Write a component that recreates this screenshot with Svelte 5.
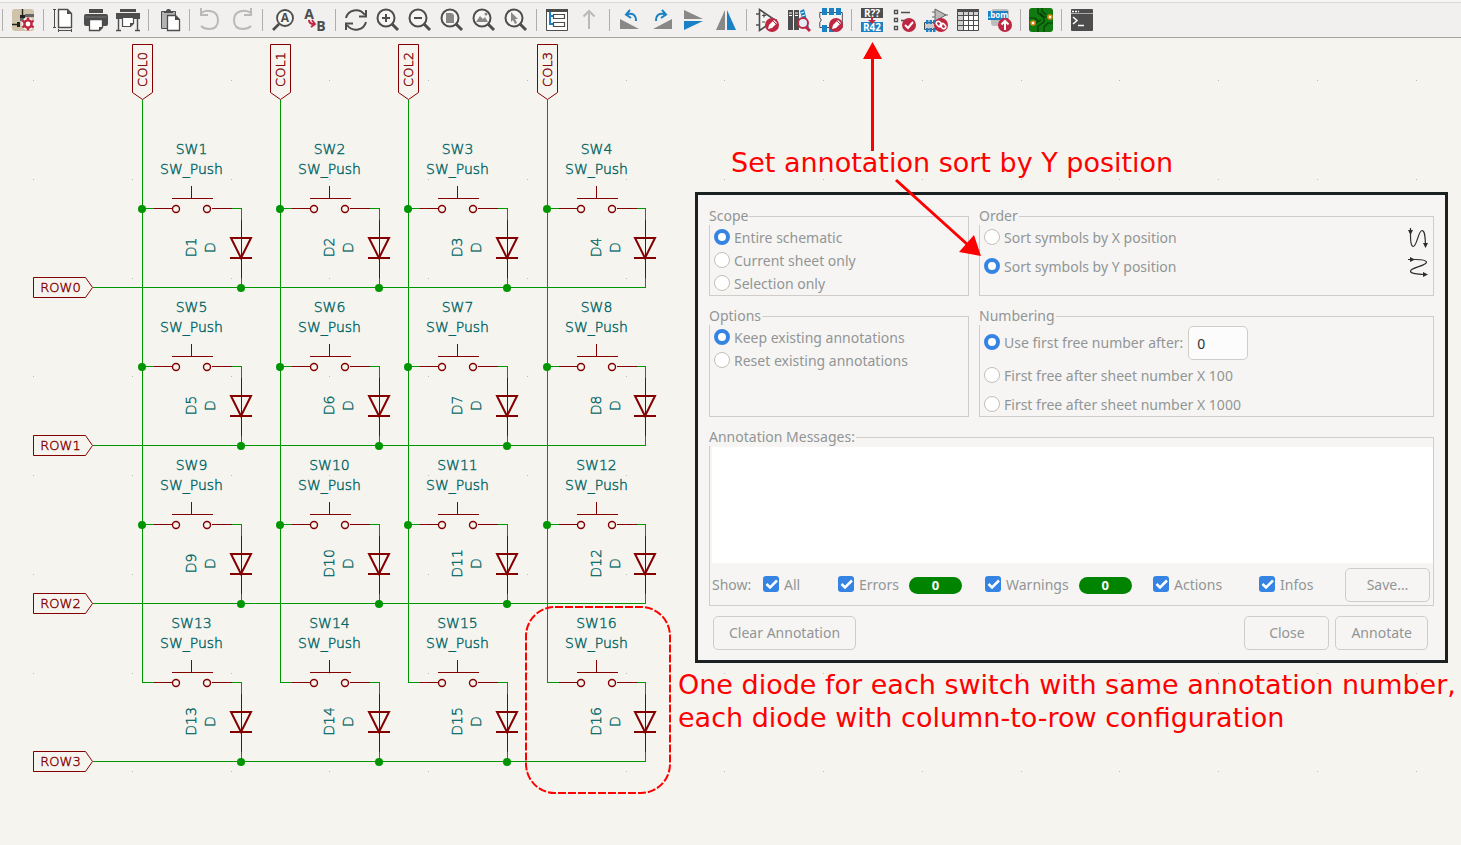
<script>
  const K = '#4d4d4d';
  const G = '#888888';
  const B = '#1a81c4';
  const R = '#bf2641';

  const lens = (inner) =>
    `<circle cx="10" cy="10" r="8.500" fill="#fff" fill-opacity=".35" stroke="${K}" stroke-width="2"/><path d="M16 16L22 22" stroke="${K}" stroke-width="3"/>${inner}`;
  const badge = (inner) => `<circle cx="17" cy="17" r="7" fill="${R}"/>${inner}`;
  const pencil = '<path d="M13 21l1-4 5-5 3 3-5 5z" fill="#fff"/><path d="M18 13l3 3" stroke="#bf2641" stroke-width="1"/>';

  const icons = {
    setup: `<rect x="1" y="1" width="22" height="22" rx="3" fill="#cfc3a9"/><path d="M11.500 1v9M1 16.500h6" stroke="#222" stroke-width="1.400"/><path d="M9 7h5v3H9zM6 14h3v5H6z" fill="#222"/><path d="M14 6h9v3h-9zM9 10h4v3H9z" fill="#666"/><circle cx="17" cy="16" r="6.500" fill="#fff" fill-opacity=".8"/><g stroke="${R}"><circle cx="17" cy="16" r="3.600" fill="#fff" stroke-width="2.400"/><path d="M17 9.500v3M17 19.500v3M11.400 12.800l2.500 1.500M20 17.700l2.600 1.500M11.400 19.200l2.500-1.500M20 14.300l2.600-1.500" stroke-width="2.400"/></g>`,
    page: `<path d="M6.500 1.500h9l4 4v14h-13z" fill="#fff" stroke="${K}" stroke-width="1.400"/><path d="M15 1.500v4.500h4.500z" fill="${K}"/><path d="M2.500 1v19M1 1.500h3M1 19.500h3M6 22.500h14M6.500 21v3M19.500 21v3" stroke="${K}" fill="none"/>`,
    print: `<path d="M5 1h14v4H5zM2 6h20q2 0 2 2v8q0 2-2 2h-3v-6H5v6H2q-2 0-2-2V8q0-2 2-2z" fill="${K}"/><path d="M5.500 11.500h13v8l-3 3h-10z" fill="#fff" stroke="${K}" stroke-width="1.300"/><path d="M15 23v-4h4z" fill="${K}"/><path d="M1 9h22" stroke="#777"/>`,
    plot: `<path d="M4 1h16v3H4zM0 5h24v6H0z" fill="${K}"/><path d="M2.500 11v12M21.500 11v12M0 22.500h5M19 22.500h5" stroke="${K}" stroke-width="1.400"/><path d="M6.500 9.500h11v6l-3 3h-8z" fill="#fff" stroke="${K}" stroke-width="1.200"/><path d="M14 19v-4h4z" fill="${K}"/>`,
    paste: `<path d="M4.500 3.500h14v17h-14z" fill="#b3b3b3" stroke="${K}"/><path d="M7 4q0-1 2-1 0-2 2.500-2T14 3q2 0 2 1v1H7z" fill="${K}"/><path d="M10.500 7.500h8l4 4v11h-12z" fill="#fff" stroke="${K}" stroke-width="1.300"/><path d="M18 7v5h5z" fill="${K}"/>`,
    undo: `<path d="M3 5C8 1 20 2 20 12q0 9-9 9-5 0-8-3" fill="none" stroke="#b9b9b9" stroke-width="2"/><path d="M3 0v7h7" fill="none" stroke="#b9b9b9" stroke-width="2"/>`,
    redo: `<path d="M21 5C16 1 4 2 4 12q0 9 9 9 5 0 8-3" fill="none" stroke="#b9b9b9" stroke-width="2"/><path d="M21 0v7h-7" fill="none" stroke="#b9b9b9" stroke-width="2"/>`,
    find: `<circle cx="14" cy="10" r="8" fill="#fff" fill-opacity=".4" stroke="${K}" stroke-width="1.800"/><path d="M8 16l-6 6" stroke="${K}" stroke-width="2.600"/><text x="14" y="14" text-anchor="middle" font-size="12" font-weight="700" fill="${K}">A</text>`,
    replace: `<text x="6" y="11" text-anchor="middle" font-size="14" font-weight="700" fill="${K}">A</text><text x="18" y="23" text-anchor="middle" font-size="14" font-weight="700" fill="${K}">B</text><path d="M6 12q0 4 5 4" fill="none" stroke="${R}" stroke-width="2"/><path d="M9 12l3 4-4 3" fill="none" stroke="${R}" stroke-width="1.800"/>`,
    refresh: `<path d="M2 10C4 2 15-1 21 7M22 14C20 22 9 25 3 17" fill="none" stroke="${K}" stroke-width="2"/><path d="M22 2v6.500h-7M2 22v-6.500h7" fill="none" stroke="${K}" stroke-width="2"/>`,
    zoomIn: lens(`<path d="M10 6v8M6 10h8" stroke="${K}" stroke-width="2"/>`),
    zoomOut: lens(`<path d="M6 10h8" stroke="${K}" stroke-width="2"/>`),
    zoomPage: lens(`<path d="M6 5h6l2 2v8H6z" fill="${G}"/>`),
    zoomFit: lens(`<path d="M4 14l4-6 3 3 2-2 3 5z" fill="${G}"/><circle cx="14" cy="6" r="1.500" fill="${G}"/>`),
    zoomSel: lens(`<path d="M7 4v10l2-2 2 4 2-1-2-4h3z" fill="${G}"/>`),
    tree: `<path d="M1.500 1.500h21v21h-21z" fill="#fff" stroke="${K}"/><path d="M1 1h22v3H1z" fill="${K}"/><path d="M5 4v12h4M5 8h4" fill="none" stroke="${B}" stroke-width="2"/><path d="M8.500 6.500h11v4h-11zM8.500 14.500h11v4h-11z" fill="#fff" stroke="${K}" stroke-width="1.200"/>`,
    up: `<path d="M12 3v18M6.500 8.500L12 3l5.500 5.500" fill="none" stroke="#b9b9b9" stroke-width="2"/>`,
    ccw: `<path d="M2 11v10h19z" fill="${G}"/><path d="M9 6q9-2 9 7" fill="none" stroke="${B}" stroke-width="2"/><path d="M12 2L8 6.500l5 3.500" fill="none" stroke="${B}" stroke-width="2"/>`,
    cw: `<path d="M22 11v10H3z" fill="${G}"/><path d="M15 6Q6 4 6 13" fill="none" stroke="${B}" stroke-width="2"/><path d="M12 2l4 4.500-5 3.500" fill="none" stroke="${B}" stroke-width="2"/>`,
    mirV: `<path d="M2 2l19 9H2z" fill="${G}"/><path d="M2 22l19-9H2z" fill="${B}"/>`,
    mirH: `<path d="M2 22L11 2v20z" fill="${G}"/><path d="M22 22L13 2v20z" fill="${B}"/>`,
    symEdit: `<path d="M4.500 1.500v21L20 12zM1 6h3.500M1 17h3.500M19 12h3" fill="#fff" fill-opacity=".4" stroke="${K}" stroke-width="1.600"/><path d="M7 7.500h4M9 5.500v4M7 14h3" stroke="${K}" stroke-width="1.200"/>${badge(pencil)}`,
    library: `<path d="M1 2h5v20H1zM7 2h5v20H7z" fill="${K}"/><path d="M13 3l4-2 5 19-4 1z" fill="${B}"/><path d="M2 5h3M2 7.500h3M8 5h3M8 7.500h3M14 5l3-1M15 8l3-1" stroke="#fff"/><circle cx="16" cy="15" r="5" fill="#e6eef5" stroke="${R}" stroke-width="2"/><path d="M19 19l4 4" stroke="${R}" stroke-width="3"/>`,
    fpEdit: `<path d="M.8 4.500h22.500v15H.8v-5q3-2.500 0-5z" fill="#fff" fill-opacity=".3" stroke="${K}"/><path d="M3 0h5v7H3zM10 0h5v7h-5zM17 0h5v7h-5zM3 17h5v7H3zM10 17h5v7h-5z" fill="${B}"/>${badge(pencil)}`,
    annotate: `<path d="M1 0h22v10H1z" fill="${K}"/><path d="M1 14h22v10H1z" fill="${B}"/><g font-size="10" font-weight="700" fill="#fff" text-anchor="middle"><text x="12" y="9">R??</text><text x="12" y="23">R42</text></g><path d="M11 9h2v3h3l-4 4-4-4h3z" fill="${R}"/>`,
    erc: `<path d="M2.500 2.500h3v3h-3zM2.500 10.500h3v3h-3zM2.500 18.500h3v3h-3z" fill="#fff" stroke="${K}" stroke-width="1.300"/><path d="M9 4.500h9M9 12.500h5" stroke="${K}" stroke-width="1.400"/>${badge('<path d="M13 17l3 3 5-6" fill="none" stroke="#fff" stroke-width="2"/>')}`,
    assign: `<path d="M11 1v12l11-6z" fill="#b9b9b9" stroke="#666"/><path d="M8 4h3M8 9h3M20 7h4" stroke="#666" stroke-width="1.200"/><path d="M.5 14.500h11v7H.5z" fill="#ccc" stroke="${K}"/><path d="M2 12h2.500v4H2zM5.500 12H8v4H5.500zM9 12h2.500v4H9zM2 20h2.500v4H2zM5.500 20H8v4H5.500zM9 20h2.500v4H9z" fill="${B}"/>${badge('<g fill="none" stroke="#fff" stroke-width="1.500"><rect x="13" y="13" width="4" height="6" rx="2" transform="rotate(-45 15 16)"/><rect x="17" y="15" width="4" height="6" rx="2" transform="rotate(-45 19 18)"/></g>')}`,
    table: `<path d="M1.500 1.500h21v21h-21z" fill="#fff" stroke="${K}"/><path d="M2 4h20v3H2zM2 4h5v18H2z" fill="#d0d0d0"/><path d="M1 1h22v3H1z" fill="${K}"/><path d="M1 7.500h22M1 12.500h22M1 17.500h22M7.500 4v19M12.500 4v19M17.500 4v19" stroke="${K}"/>`,
    bom: `<rect x="3" y="1" width="18" height="17" rx="3" fill="#bdbdbd"/><path d="M0 3h20v9H0z" fill="${B}"/><text x="10" y="10" text-anchor="middle" font-size="8" font-weight="700" fill="#fff">.bom</text>${badge('<path d="M17 22v-8M13.500 16.500L17 13l3.500 3.500" fill="none" stroke="#fff" stroke-width="2"/>')}`,
    pcb: `<rect width="24" height="24" rx="3" fill="#117a10"/><g fill="none" stroke="#063f06" stroke-width="1.200"><path d="M9 0v5l6 5v4l-6 4v6M13 0v3l4 4M18 9h-3l-4-4M24 15h-5l-4 4v5M0 10h6l3 3M7 15l5-3"/></g><g fill="#fff" stroke="#e58a18" stroke-width="1.600"><circle cx="21" cy="9" r="2"/><circle cx="4" cy="15" r="2"/></g>`,
    console: `<rect x="1" y="1" width="22" height="22" rx="1" fill="${K}"/><path d="M1 5.500h22" stroke="#aaa"/><path d="M2 3.500h7" stroke="#fff" stroke-width="1.500" stroke-dasharray="2 1"/><path d="M3 9l4 3.500L3 16M8 17.500h6" fill="none" stroke="#fff" stroke-width="1.500"/>`
  };

  const groups = [
    [['setup', 'Schematic setup']],
    [['page', 'Page settings'], ['print', 'Print'], ['plot', 'Plot']],
    [['paste', 'Paste']],
    [['undo', 'Undo'], ['redo', 'Redo']],
    [['find', 'Find'], ['replace', 'Find and replace']],
    [['refresh', 'Refresh'], ['zoomIn', 'Zoom in'], ['zoomOut', 'Zoom out'], ['zoomPage', 'Zoom to page'], ['zoomFit', 'Zoom to objects'], ['zoomSel', 'Zoom to selection']],
    [['tree', 'Hierarchy navigator'], ['up', 'Leave sheet']],
    [['ccw', 'Rotate counterclockwise'], ['cw', 'Rotate clockwise'], ['mirV', 'Mirror vertically'], ['mirH', 'Mirror horizontally']],
    [['symEdit', 'Symbol editor'], ['library', 'Browse libraries'], ['fpEdit', 'Footprint editor']],
    [['annotate', 'Annotate schematic'], ['erc', 'Electrical rules checker'], ['assign', 'Assign footprints'], ['table', 'Bulk edit fields'], ['bom', 'Generate BOM']],
    [['pcb', 'Open PCB']],
    [['console', 'Scripting console']]
  ];

  // Schematic geometry, in page pixels.
  const cols = [
    { x: 142, d: 99 },
    { x: 280, d: 99 },
    { x: 408, d: 99 },
    { x: 547, d: 98 }
  ];
  const rows = [208, 366, 524, 682];
  const cells = rows.flatMap((y, r) => cols.map((c, i) => ({ ...c, y, r, i, n: r * 4 + i + 1 })));
  const dots = Array.from({ length: 8 * 26 }, (_, k) => ({
    x: Math.round(33 + (k % 26) * 98.75),
    y: Math.round(80 + Math.floor(k / 26) * 98.75)
  }));

  let scope = $state('entire');
  let order = $state('y');
  let options = $state('keep');
  let numbering = $state('first');
  let start = $state('0');
  let messages = $state('');
</script>

<header class="toolbar">
  {#each groups as group}
    <div class="group">
      {#each group as [name, label]}
        <button class="tool" aria-label={label}>
          <svg width="24" height="24" viewBox="0 0 24 24" aria-hidden="true">{@html icons[name]}</svg>
        </button>
      {/each}
    </div>
  {/each}
</header>

<main class="canvas">
  <svg class="sheet" aria-label="Switch matrix schematic">
    <g transform="translate(0.5 -37.5)">
      <g fill="#b9b9b5" shape-rendering="crispEdges">
        {#each dots as d}<rect x={d.x - 0.5} y={d.y - 0.5} width="1" height="1" />{/each}
      </g>
      <g class="wire">
        {#each cols as c}<path d="M{c.x} 99V682H{c.x + 11}" />{/each}
        {#each rows as y}<path d="M92 {y + 79}H645" />{/each}
        {#each cells as c}
          <path d="M{c.x} {c.y}h11M{c.x + 89} {c.y}H{c.x + c.d}v11M{c.x + c.d} {c.y + 69}v10" />
        {/each}
      </g>
      {#each cells as c}
        <g class="part">
          <path d="M{c.x + 11} {c.y}h19M{c.x + 69} {c.y}h20M{c.x + 29} {c.y - 10}h41M{c.x + 49} {c.y - 23}v13M{c.x + c.d} {c.y + 11}v58" />
        </g>
        <g class="shape">
          <circle cx={c.x + 33.5} cy={c.y + 0.5} r="3.5" stroke-width="1.4" />
          <circle cx={c.x + 64.5} cy={c.y + 0.5} r="3.5" stroke-width="1.4" />
          <path d="M{c.x + c.d - 10.5} {c.y + 29.5}h20l-10 20zM{c.x + c.d - 11.5} {c.y + 49.5}h22" stroke-width="2" />
        </g>
        <g class="name" text-anchor="middle">
          <text x={c.x + 49} y={c.y - 55}>SW{c.n}</text>
          <text x={c.x + 49} y={c.y - 35}>SW_Push</text>
          <text transform="translate({c.x + 53} {c.y + 39}) rotate(-90)">D{c.n}</text>
          <text transform="translate({c.x + 72} {c.y + 39}) rotate(-90)">D</text>
        </g>
        {#if c.r < 3}<circle class="node" cx={c.x - 0.5} cy={c.y + 0.5} r="4" />{/if}
        {#if c.i < 3}<circle class="node" cx={c.x + c.d - 0.5} cy={c.y + 79.5} r="4" />{/if}
      {/each}
      {#each cols as c, i}
        <path class="flag" d="M{c.x - 10} 44h20v48l-10 7l-10-7z" />
        <text class="port" text-anchor="middle" transform="translate({c.x + 4} 69) rotate(-90)">COL{i}</text>
      {/each}
      {#each rows as y, i}
        <path class="flag" d="M33 {y + 69}h52l7 10l-7 10H33z" />
        <text class="port" text-anchor="middle" x="60" y={y + 83}>ROW{i}</text>
      {/each}
    </g>
  </svg>

  <section class="dialog" aria-label="Annotate schematic">
    <div class="columns">
      <fieldset>
        <legend>Scope</legend>
        <label class="row"><input type="radio" value="entire" bind:group={scope} />Entire schematic</label>
        <label class="row"><input type="radio" value="sheet" bind:group={scope} />Current sheet only</label>
        <label class="row"><input type="radio" value="selection" bind:group={scope} />Selection only</label>
      </fieldset>
      <fieldset class="spaced">
        <legend>Order</legend>
        <div class="row">
          <label class="row"><input type="radio" value="x" bind:group={order} />Sort symbols by X position</label>
          <svg class="curve" width="20" height="20" viewBox="0 0 20 20" aria-hidden="true">
            <path d="M2.500 0v8C2.500 14 3.500 18 5 18.500C9 19 10 3 14 2.500C17 2.500 17 9 17.500 16" />
            <path class="tip" d="M0 2h5L2.500 7zM15 15h5l-2.500 5z" />
          </svg>
        </div>
        <div class="row">
          <label class="row"><input type="radio" value="y" bind:group={order} />Sort symbols by Y position</label>
          <svg class="curve" width="20" height="20" viewBox="0 0 20 20" aria-hidden="true">
            <path d="M0 2.500h8C14 2.500 18 3.500 18.500 5C19 9 3 10 2.500 14C2.500 17 9 17 16 17.500" />
            <path class="tip" d="M2 0v5l5-2.500zM15 15v5l5-2.500z" />
          </svg>
        </div>
      </fieldset>
      <fieldset>
        <legend>Options</legend>
        <label class="row"><input type="radio" value="keep" bind:group={options} />Keep existing annotations</label>
        <label class="row"><input type="radio" value="reset" bind:group={options} />Reset existing annotations</label>
      </fieldset>
      <fieldset class="spaced">
        <legend>Numbering</legend>
        <div class="row tall">
          <label class="row"><input type="radio" value="first" bind:group={numbering} />Use first free number after:</label>
          <input class="number" type="text" aria-label="First number" bind:value={start} />
        </div>
        <label class="row"><input type="radio" value="x100" bind:group={numbering} />First free after sheet number X 100</label>
        <label class="row"><input type="radio" value="x1000" bind:group={numbering} />First free after sheet number X 1000</label>
      </fieldset>
    </div>

    <fieldset class="log">
      <legend>Annotation Messages:</legend>
      <textarea aria-label="Annotation messages" bind:value={messages}></textarea>
      <div class="filters">
        <span>Show:</span>
        <label class="row"><input type="checkbox" checked />All</label>
        <div class="row"><label class="row"><input type="checkbox" checked />Errors</label><span class="count">0</span></div>
        <div class="row"><label class="row"><input type="checkbox" checked />Warnings</label><span class="count">0</span></div>
        <label class="row"><input type="checkbox" checked />Actions</label>
        <label class="row"><input type="checkbox" checked />Infos</label>
        <button class="push">Save…</button>
      </div>
    </fieldset>

    <footer>
      <button class="push clear">Clear Annotation</button>
      <button class="push">Close</button>
      <button class="push">Annotate</button>
    </footer>
  </section>

  <p class="note top">Set annotation sort by Y position</p>
  <p class="note bottom">One diode for each switch with same annotation number,<br />each diode with column-to-row configuration</p>

  <svg class="sheet marks" aria-hidden="true">
    <g transform="translate(0 -38)">
      <path d="M872.500 151V58M896 180L968 245" fill="none" stroke="#f00" stroke-width="3" />
      <path d="M872.500 42l9.500 17h-19zM981 256l-7-21-15 17z" fill="#f00" />
      <rect x="526" y="607" width="144" height="186" rx="29" fill="none" stroke="#f00" stroke-width="2" stroke-dasharray="8 2" />
    </g>
  </svg>
</main>

<style>
  :global(body) {
    background: #f5f4ef;
    font-family: "Noto Sans", "Open Sans", sans-serif;
  }

  .toolbar {
    display: flex;
    box-sizing: border-box;
    height: 38px;
    padding-top: 2px;
    padding-left: 2px;
    background: #f1f0ee;
    border-bottom: 1px solid #a5a3a1;
    box-shadow: inset 0 2px #f6f5f4, inset 0 3px #dcdad7;
  }

  .group {
    display: flex;
    align-items: center;
    padding: 0 4px 0 5px;
    background: linear-gradient(#b0aeac, #b0aeac) 0 7px / 1px 22px no-repeat;
  }

  .tool {
    display: flex;
    justify-content: center;
    width: 32px;
    padding: 0;
    border: 0;
    background: none;
    font-family: "Open Sans", sans-serif;
  }

  .tool svg {
    overflow: visible;
  }

  .canvas {
    position: relative;
    min-height: calc(100vh - 38px);
    overflow: hidden;
  }

  .sheet {
    display: block;
    width: 100%;
    height: 807px;
    font-family: "DejaVu Sans Light", "DejaVu Sans", sans-serif;
    font-size: 14px;
    font-weight: 200;
  }

  .marks {
    position: absolute;
    top: 0;
    left: 0;
    pointer-events: none;
  }

  .wire path {
    fill: none;
    stroke: #009600;
    shape-rendering: crispEdges;
  }

  .node {
    fill: #009600;
  }

  .part path {
    fill: none;
    stroke: #840000;
    shape-rendering: crispEdges;
  }

  .shape > * {
    fill: none;
    stroke: #840000;
  }

  .shape circle {
    fill: #f5f4ef;
  }

  .flag {
    fill: #f5f4ef;
    stroke: #840000;
  }

  .port {
    font-size: 13px;
    fill: #840000;
    stroke: #840000;
    stroke-width: 0.4px;
  }

  .name {
    fill: #006464;
    stroke: #006464;
    stroke-width: 0.4px;
  }

  .dialog {
    position: absolute;
    top: 154px;
    left: 695px;
    right: 13px;
    box-sizing: border-box;
    padding: 12px 11px 10px;
    border: 3px solid #1b2022;
    background: #f6f5f4;
    color: #929595;
    font-size: 14px;
    line-height: 18px;
  }

  .columns {
    display: grid;
    grid-template-columns: 4fr 7fr;
    gap: 11px 10px;
  }

  fieldset {
    min-width: 0;
    margin: 0;
    padding: 1px 0 0 4px;
    border: 1px solid #cfccc9;
  }

  legend {
    margin-left: -5px;
    padding: 0 1px 0 0;
    background: #f6f5f4;
  }

  .row {
    display: flex;
    align-items: center;
    height: 23px;
  }

  .spaced > .row + .row {
    margin-top: 6px;
  }

  .spaced > .tall {
    height: 34px;
  }

  .spaced > .tall + .row {
    margin-top: 4px;
  }

  .curve {
    margin-left: auto;
    margin-right: 5px;
    fill: none;
    stroke: #2d2d2d;
    stroke-width: 1.2;
  }

  .curve .tip {
    fill: #2d2d2d;
    stroke: none;
  }

  input[type="radio"],
  input[type="checkbox"] {
    appearance: none;
    box-sizing: border-box;
    flex: none;
    width: 16px;
    height: 16px;
    margin: 0 4px 2px 0;
    border: 1px solid #c4bfba;
    border-radius: 8px;
    background: #fff;
  }

  input[type="radio"]:checked {
    border: 4px solid #3584e4;
  }

  input[type="checkbox"] {
    margin-right: 5px;
    border: 0;
    border-radius: 3px;
  }

  input[type="checkbox"]:checked {
    background: #3584e4 url("data:image/svg+xml,%3Csvg xmlns='http://www.w3.org/2000/svg' viewBox='0 0 16 16'%3E%3Cpath d='M3.500 8l3.500 3.500L14 4.500' fill='none' stroke='white' stroke-width='2.500'/%3E%3C/svg%3E");
  }

  .number {
    box-sizing: border-box;
    width: 60px;
    height: 34px;
    margin-left: 5px;
    padding: 0 8px;
    border: 1px solid #cfccc9;
    border-radius: 5px;
    background: #fcfcfc;
    color: #2e3436;
    font: inherit;
  }

  .log {
    margin-top: 11px;
    padding-left: 2px;
  }

  .log legend {
    margin-left: -3px;
  }

  textarea {
    display: block;
    box-sizing: border-box;
    width: 100%;
    height: 116px;
    border: 0;
    background: #fff;
    resize: none;
  }

  .filters {
    display: grid;
    grid-template-columns: 51px 75px 147px 168px 106px 1fr 85px;
    align-items: center;
    padding: 5px 3px 3px 0;
  }

  .count {
    width: 53px;
    margin-left: 10px;
    border-radius: 9px;
    background: #008400;
    color: #fff;
    font-size: 13px;
    font-weight: 700;
    line-height: 17px;
    text-align: center;
  }

  .push {
    box-sizing: border-box;
    min-width: 85px;
    height: 34px;
    padding: 0 15px;
    border: 1px solid #cfccc9;
    border-radius: 5px;
    background: #f6f5f4;
    color: #929595;
    font: inherit;
  }

  footer {
    display: flex;
    gap: 6px;
    padding: 10px 6px 0 4px;
  }

  .clear {
    margin-right: auto;
  }

  .note {
    position: absolute;
    margin: 0;
    color: #f00;
    font-family: "DejaVu Sans", sans-serif;
    font-size: 27px;
    line-height: 33px;
    white-space: nowrap;
  }

  .note.top {
    top: 108px;
    left: 731px;
  }

  .note.bottom {
    top: 630px;
    left: 678px;
  }
</style>
